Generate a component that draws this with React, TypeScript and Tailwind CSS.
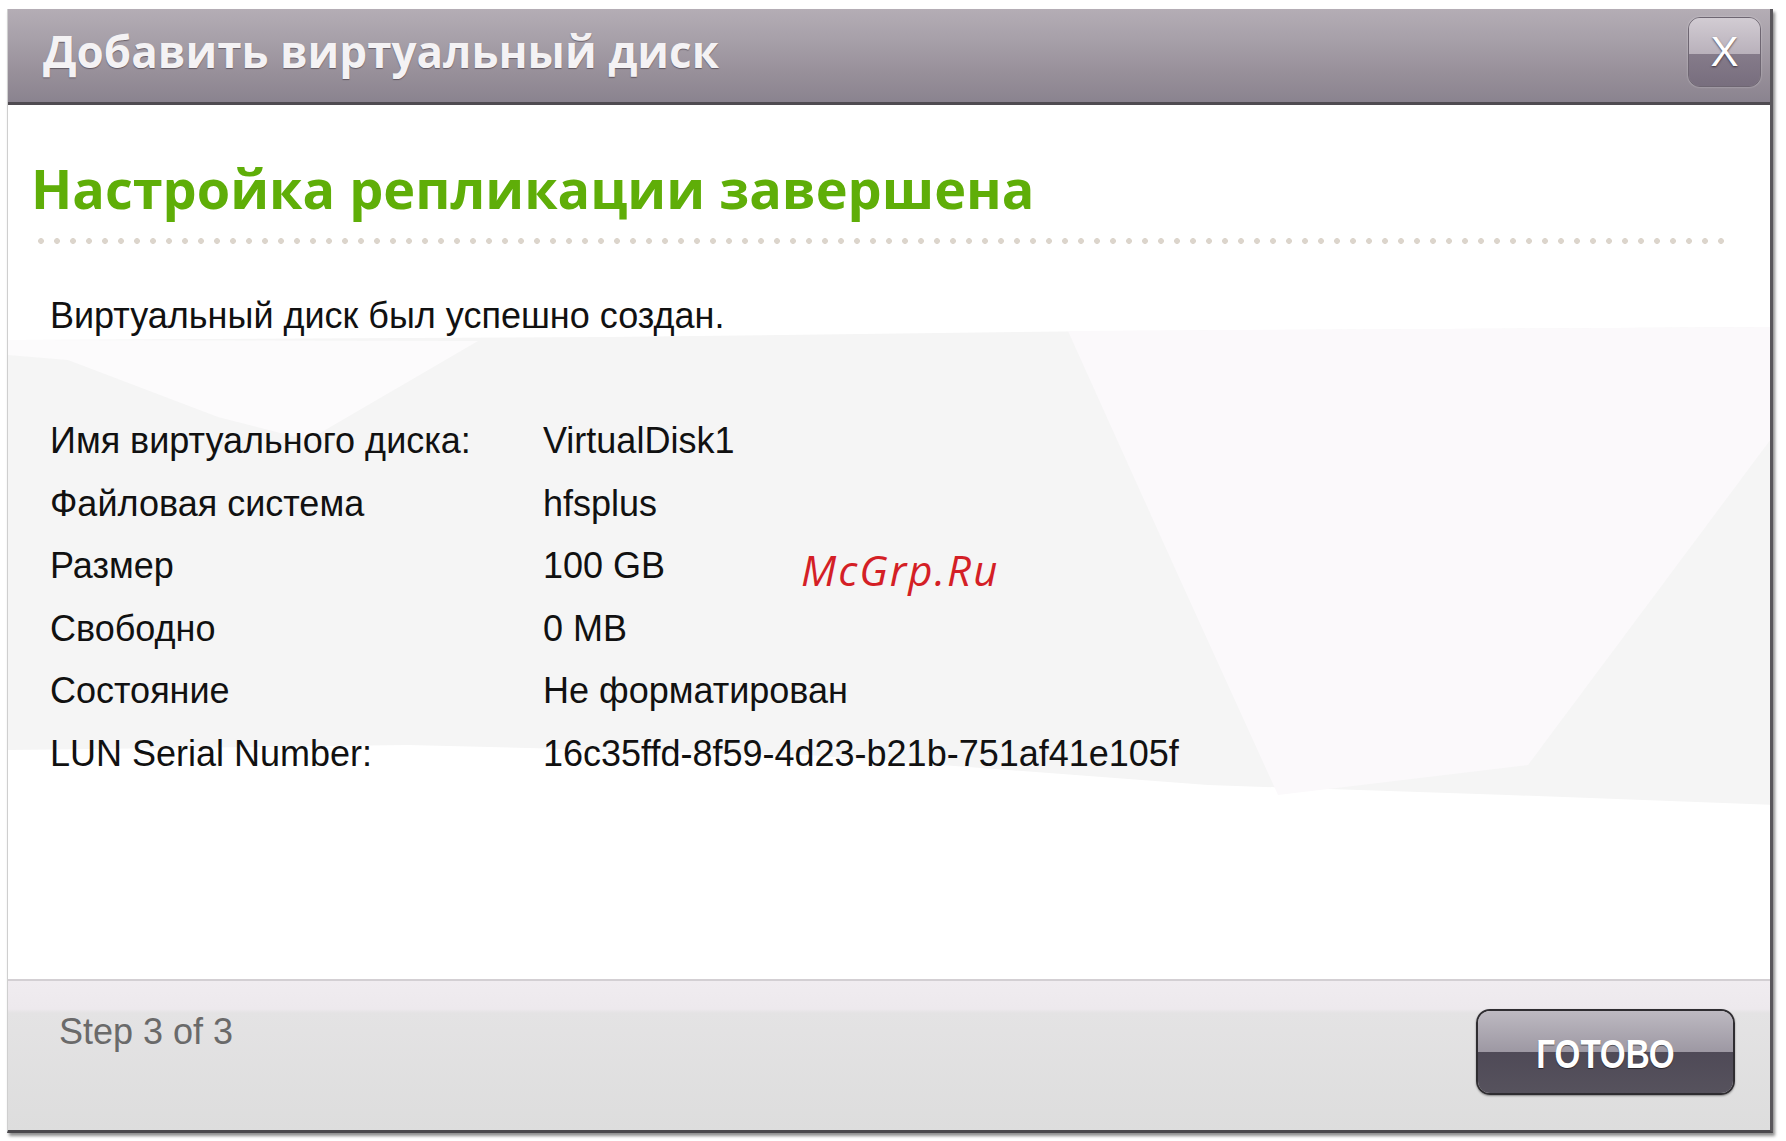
import React from "react";

const rows: [string, string][] = [
  ["Имя виртуального диска:", "VirtualDisk1"],
  ["Файловая система", "hfsplus"],
  ["Размер", "100 GB"],
  ["Свободно", "0 MB"],
  ["Состояние", "Не форматирован"],
  ["LUN Serial Number:", "16c35ffd-8f59-4d23-b21b-751af41e105f"],
];

export default function App() {
  return (
    <div className="relative w-[1786px] h-[1141px] bg-white overflow-hidden">
      <div className="ml-[7px] mt-[9px] w-[1766px] h-[1124px] flex flex-col border-l border-[#cfcfcf] border-r-[3px] border-r-[#5a575c] border-b-[3px] border-b-[#4a484c] shadow-[2px_3px_3px_rgba(0,0,0,0.45)]">
        {/* Title bar */}
        <div className="h-[96px] shrink-0 flex items-start justify-between bg-[linear-gradient(to_bottom,#b4adb5_0%,#a69fa8_35%,#978f99_70%,#8a838f_100%)] border-b-[3px] border-b-[#4f4b51]">
          <div className="pl-[35px] pt-[14px] text-[44px] leading-[56px] font-bold text-[#f4f2f4] [text-shadow:0_1px_1px_rgba(60,50,60,0.6)] font-['Open_Sans',sans-serif]">
            Добавить виртуальный диск
          </div>
          <div className="mt-[8px] mr-[9px] w-[73px] h-[70px] rounded-[12px] border border-[#6e6672] overflow-hidden relative shadow-[0_0_2px_rgba(255,255,255,0.5)]">
            <div className="h-[36px] bg-[linear-gradient(to_bottom,#d2ccd3,#b9b1bb)]" />
            <div className="h-[34px] bg-[linear-gradient(to_bottom,#857b8a,#776d7d)]" />
            <div className="absolute inset-0 flex items-center justify-center text-[42px] leading-none text-white font-['Liberation_Sans',sans-serif] [text-shadow:0_1px_2px_rgba(40,30,40,0.8)]">
              X
            </div>
          </div>
        </div>

        {/* Body */}
        <div className="relative flex-1 overflow-hidden bg-white">
          <svg className="absolute inset-0" width="1766" height="877" viewBox="0 0 1766 877">
            <polygon
              points="0,235 600,232 1100,226 1766,222 1766,700 1500,690 1200,680 800,650 400,640 0,645"
              fill="#f5f5f5"
            />
            <polygon points="0,235 470,236 300,335 210,312 60,255 0,250" fill="#fcfbfc" />
            <polygon points="1060,226 1766,222 1766,330 1520,660 1270,690 1170,470" fill="#fbf9fb" />
          </svg>
          <div className="relative pl-[23px] pr-[42px]">
            <div className="mt-[53px] h-[60px] text-[54px] leading-[60px] font-bold text-[#5fae08] font-['Open_Sans',sans-serif] whitespace-nowrap">
              Настройка репликации завершена
            </div>
            <div className="mt-[20px] ml-[2px] h-[6px] bg-[radial-gradient(circle,#dcd5cc_2.6px,transparent_3.2px)] bg-[length:16px_6px]" />
            <div className="pl-[19px] font-['Liberation_Sans',Arial,sans-serif] text-[#111]">
              <div className="mt-[52px] h-[40px] text-[36px] leading-[40px]">
                Виртуальный диск был успешно создан.
              </div>
              <div className="mt-[74px]">
                {rows.map(([k, v]) => (
                  <div key={k} className="flex h-[62.5px] items-center text-[36px] leading-[40px]">
                    <div className="w-[493px] shrink-0">{k}</div>
                    <div>{v}</div>
                  </div>
                ))}
              </div>
            </div>
          </div>
        </div>

        {/* Footer */}
        <div className="h-[151px] shrink-0 flex items-start justify-between border-t-2 border-t-[#d3cfd3] bg-[linear-gradient(to_bottom,#f0ecf0_0px,#ede9ed_28px,#e4e3e4_32px,#dddddd_100%)]">
          <div className="pl-[51px] pt-[31px] text-[36px] leading-[40px] text-[#6a6a6a] font-['Liberation_Sans',Arial,sans-serif]">
            Step 3 of 3
          </div>
          <button className="mt-[28px] mr-[35px] w-[259px] h-[86px] rounded-[14px] border-2 border-[#2f2d31] overflow-hidden relative shadow-[0_1px_2px_rgba(0,0,0,0.4)]">
            <div className="h-[41px] bg-[linear-gradient(to_bottom,#bdb9c1,#9d98a3)]" />
            <div className="h-[41px] bg-[linear-gradient(to_bottom,#4f4a57,#56525d)]" />
            <div className="absolute inset-0 flex items-center justify-center pt-[4px]">
              <span className="scale-x-[0.83] text-[40px] leading-none font-bold text-white font-['Liberation_Sans',Arial,sans-serif] [text-shadow:0_1px_1px_rgba(0,0,0,0.5)]">
                ГОТОВО
              </span>
            </div>
          </button>
        </div>
      </div>

      {/* Watermark */}
      <div className="absolute left-[801px] top-[545px] text-[42px] leading-[50px] italic text-[#d41f26] font-['Open_Sans',sans-serif] tracking-[2px]">
        McGrp.Ru
      </div>
    </div>
  );
}
